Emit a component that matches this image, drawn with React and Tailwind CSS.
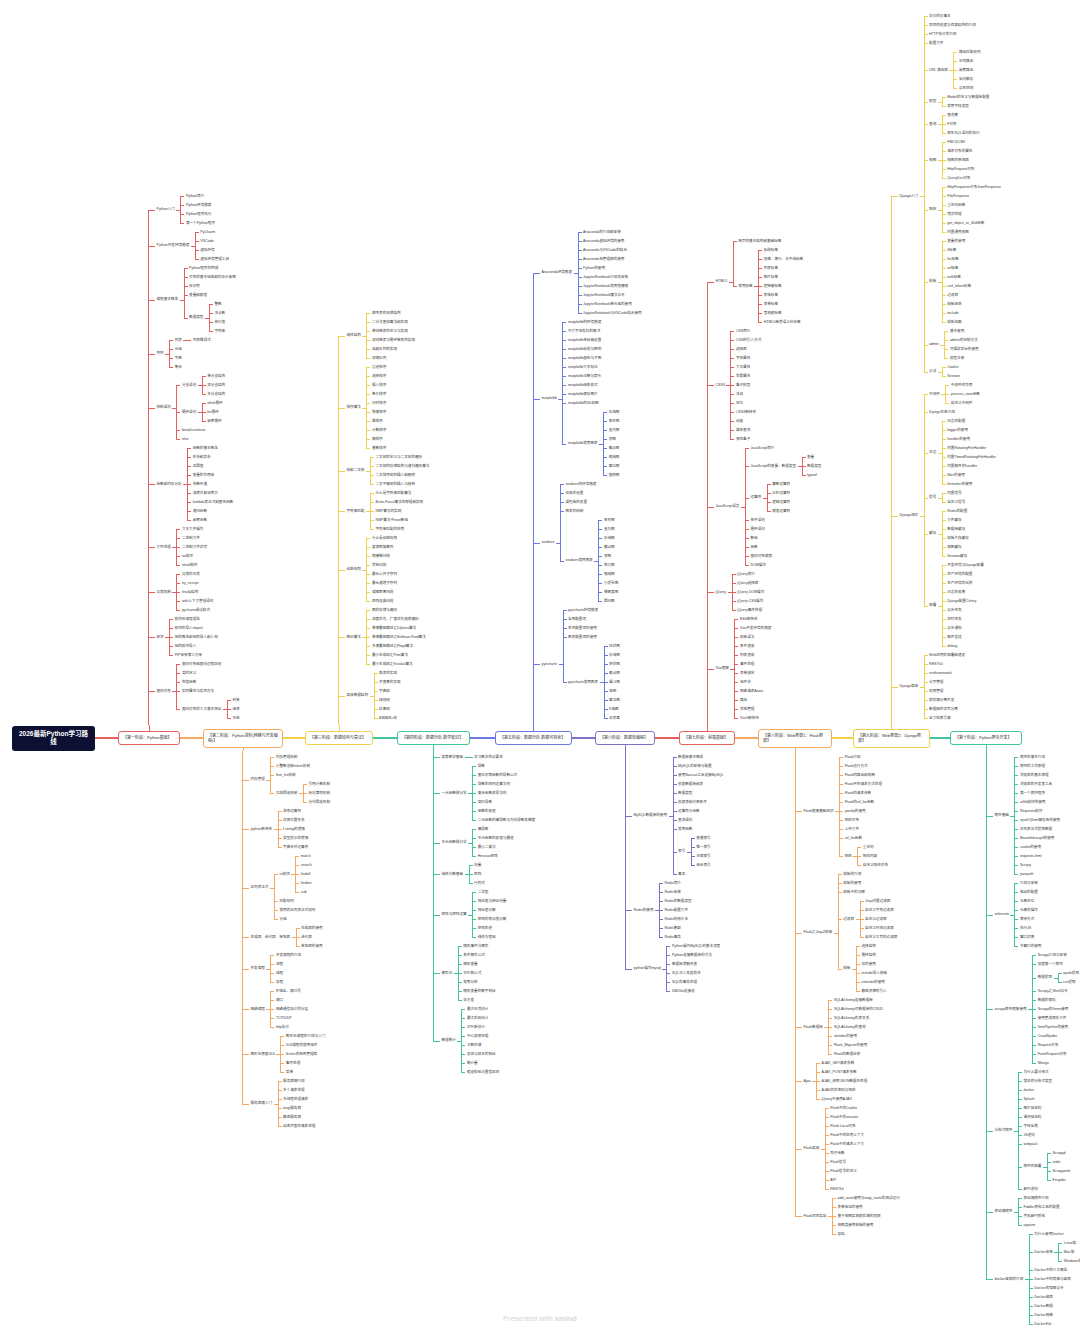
import React from 'react';

// colour themes for each stage (lines + node borders)
const T = {
  red: { bg: 'bg-[#e4605c]', bd: 'border-[#e4605c]' },
  orange: { bg: 'bg-[#f4a862]', bd: 'border-[#f4a862]' },
  yellow: { bg: 'bg-[#f3d04c]', bd: 'border-[#f3d04c]' },
  green: { bg: 'bg-[#3fc3a0]', bd: 'border-[#3fc3a0]' },
  blue: { bg: 'bg-[#6b79e3]', bd: 'border-[#6b79e3]' },
  purple: { bg: 'bg-[#7b73c8]', bd: 'border-[#7b73c8]' },
};

const stage1 = [
  ['Python入门', ['Python简介', 'Python环境搭建', 'Python程序执行', '第一个Python程序']],
  ['Python开发环境搭建', ['PyCharm', 'VSCode', '虚拟环境', '虚拟环境管理工具']],
  ['编程基本概念', ['Python程序的构成', '对象的基本组成和内存示意图', '标识符', '变量和赋值', ['数据类型', ['整数', '浮点数', '布尔值', '字符串']]]],
  ['序列', [['列表', ['列表推导式']], '元组', '字典', '集合']],
  ['控制语句', [['分支语句', ['单分支结构', '双分支结构', '多分支结构']], ['循环语句', ['while循环', 'for循环', '嵌套循环']], 'break/continue', 'else']],
  ['函数和内存分析', ['函数的基本概念', '形参和实参', '返回值', '变量的作用域', '参数传递', '浅拷贝和深拷贝', 'lambda表达式和匿名函数', '递归函数', '嵌套函数']],
  ['文件处理', ['文本文件操作', '二进制文件', '二进制文件读写', 'os模块', 'shutil模块']],
  ['异常机制', ['异常的本质', 'try_except', 'finally结构', 'with上下文管理语句', 'pycharm调试模式']],
  ['模块', ['模块化编程理念', '模块的导入import', '包的概念和包的导入和入包', '包的模块导入', 'PIP安装第三方库']],
  ['面向对象', ['面向对象和面向过程区别', '类的定义', '构造函数', '实例属性与实例方法', ['面向对象的三大基本特征', ['封装', '继承', '多态']]]],
];

const stage2 = [
  ['内存管理', ['内存管理机制', '小整数池和intern机制', 'free_list机制', ['垃圾回收机制', ['引用计数机制', '标记清除机制', '分代回收机制']]]],
  ['python新特性', ['海象运算符', '仅限位置形参', 'f-string的增强', '类型提示的增强', '字典合并运算符']],
  ['正则表达式', [['re模块', ['match', 'search', 'findall', 'finditer', 'sub']], '匹配规则', '常用的正则表达式规则', '分组']],
  ['生成器、迭代器、装饰器', ['生成器的使用', '迭代器', '装饰器的使用']],
  ['并发编程', ['并发编程的介绍', '进程', '线程', '协程']],
  ['网络编程', ['IP地址、端口号', '端口', '网络通信协议的分层', 'TCP/UDP', 'http协议']],
  ['图形化界面GUI', ['图形化编程的介绍与入门', 'GUI编程的常用组件', 'tkinter的布局管理器', '事件处理', '菜单']],
  ['服务器端入门', ['服务器端介绍', '多个请求处理', '多线程处理请求', 'wsgi服务器', '静态服务器', '动态页面的请求处理']],
];

const stage3 = [
  ['线性结构', ['顺序表的存储结构', '二分法查找算法和实现', '单向链表的定义与实现', '双向链表与循环链表的实现', '栈和队列的实现', '双端队列']],
  ['排序算法', ['冒泡排序', '选择排序', '插入排序', '希尔排序', '归并排序', '快速排序', '堆排序', '计数排序', '桶排序', '基数排序']],
  ['树和二叉树', ['二叉树的定义与二叉树的遍历', '二叉树的存储结构与递归遍历算法', '二叉排序树的插入和删除', '二叉平衡树的插入与旋转']],
  ['字符串匹配', ['什么是字符串匹配算法', 'Brute-Force算法的原理和实现', 'KMP算法的实现', 'KMP算法中next数组', '字符串匹配的应用']],
  ['动态规划', ['什么是动态规划', '斐波那契数列', '爬楼梯问题', '背包问题', '最长公共子序列', '最长递增子序列', '编辑距离问题', '矩阵连乘问题']],
  ['图论算法', ['图的存储与遍历', '深度优先、广度优先搜索遍历', '单源最短路径之Dijkstra算法', '单源最短路径之Bellman-Ford算法', '多源最短路径之Floyd算法', '最小生成树之Prim算法', '最小生成树之Kruskal算法']],
  ['高级数据结构', ['跳表的实现', '并查集的实现', '字典树', '线段树', '红黑树', 'B树和B+树']],
];

const stage4 = [
  ['高等数学基础', ['学习数学的必要性']],
  ['一元函数微分学', ['导数', '基本初等函数的导数公式', '导数的四则运算法则', '复合函数求导法则', '高阶导数', '函数的极值', '二元函数的偏导数与方向导数及梯度']],
  ['多元函数微分学', ['偏导数', '多元函数的极值与最值', '最小二乘法', 'Hessian矩阵']],
  ['线性代数基础', ['向量', '矩阵', '行列式']],
  ['矩阵与矩阵运算', ['二次型', '特征值与特征向量', '特征值分解', '矩阵的奇异值分解', '矩阵的逆', '线性方程组']],
  ['概率论', ['随机事件与概率', '条件概率公式', '随机变量', '贝叶斯公式', '常用分布', '随机变量的数字特征', '协方差']],
  ['数理统计', ['最大似然估计', '最大后验估计', '贝叶斯估计', '中心极限定理', '大数定律', '总体与样本的特征', '统计量', '假设检验与置信区间']],
];

const stage5 = [
  ['Anaconda环境搭建', ['Anaconda的介绍和安装', 'Anaconda虚拟环境的使用', 'Anaconda与VSCode的结合', 'Anaconda包管理器的使用', 'Python的使用', 'JupyterNotebook介绍及安装', 'JupyterNotebook常用快捷键', 'JupyterNotebook魔法命令', 'JupyterNotebook单元格的使用', 'JupyterNotebook与VSCode结合使用']],
  ['matplotlib', ['matplotlib的环境搭建', '中文字体乱码的解决', 'matplotlib坐标轴设置', 'matplotlib标题与图例', 'matplotlib画布与子图', 'matplotlib文本标注', 'matplotlib注释与箭头', 'matplotlib线条样式', 'matplotlib保存图片', 'matplotlib的3D绘图', ['matplotlib常用图表', ['折线图', '条形图', '直方图', '饼图', '散点图', '箱线图', '雷达图', '面积图']]]],
  ['seaborn', ['seaborn的环境搭建', '风格的设置', '调色板的设置', '图表的绘制', ['seaborn常用图表', ['条形图', '直方图', '折线图', '散点图', '饼图', '热力图', '箱线图', '小提琴图', '核密度图', '回归图']]]],
  ['pyecharts', ['pyecharts环境搭建', '全局配置项', '系列配置项的使用', '图表配置项的使用', ['pyecharts常用图表', ['柱状图', '折线图', '饼状图', '散点图', '漏斗图', '地图', '雷达图', 'K线图', '仪表盘']]]],
];

const stage6 = [
  ['MySQL数据库的使用', ['数据库基本概念', 'MySQL的安装与配置', '使用Navicat工具连接MySQL', '创建数据库和表', '数据类型', '创建表和约束条件', '运算符与函数', '查询语句', '常用函数', ['索引', ['普通索引', '唯一索引', '主键索引', '组合索引']], '事务']],
  ['Redis的使用', ['Redis简介', 'Redis安装', 'Redis的数据类型', 'Redis配置文件', 'Redis的持久化', 'Redis集群', 'Redis事务']],
  ['python操作mysql', ['Python操作MySQL的基本流程', 'Python连接数据库的方法', '数据库增删改查', 'SQL注入及其防范', 'SQL的事务处理', 'DBUtils连接池']],
];

const stage7 = [
  ['HTML5', ['网页的基本结构和基础标签', ['常用标签', ['标题标签', '段落、换行、水平线标签', '列表标签', '图片标签', '超链接标签', '表格标签', '表单标签', '音视频标签', 'HTML5新增语义化标签']]]],
  ['CSS3', ['CSS简介', 'CSS的引入方式', '选择器', '字体属性', '文本属性', '背景属性', '盒子模型', '浮动', '定位', 'CSS3新特性', '动画', '媒体查询', '弹性盒子']],
  ['JavaScript语言', ['JavaScript简介', ['JavaScript的变量、数据类型', ['变量', '数据类型', 'typeof']], ['运算符', ['算数运算符', '比较运算符', '逻辑运算符', '赋值运算符']], '条件语句', '循环语句', '数组', '函数', '面向对象编程', 'DOM操作']],
  ['jQuery', ['jQuery简介', 'jQuery选择器', 'jQuery DOM操作', 'jQuery CSS操作', 'jQuery事件处理']],
  ['Vue框架', ['ES6新特性', 'Vue开发环境的搭建', '模板语法', '条件渲染', '列表渲染', '事件处理', '表单绑定', '组件化', '网络请求Axios', '路由', '状态管理', 'Vue3新特性']],
];

const stage8 = [
  ['Flask框架基础知识', ['Flask介绍', 'Flask运行方式', 'Flask的路由和视图', 'Flask不同请求方式处理', 'Flask的请求参数', 'Flask的url_for函数', 'jsonify的使用', '响应对象', '上传文件', 'url_for函数', ['响应', ['重定向', '响应内容', '自定义响应对象']]]],
  ['Flask之Jinja2模板', ['模板的介绍', '模板的使用', '模板中的注释', ['过滤器', ['Jinja内置过滤器', '自定义字符过滤器', '自定义过滤器', '自定义时间过滤器', '自定义大写的过滤器']], ['模板', ['选择结构', '循环结构', '宏的使用', 'include导入模板', 'extends的使用', '静态资源的引入']]]],
  ['Flask数据库', ['SQLAlchemy连接数据库', 'SQLAlchemy对数据库的CRUD', 'SQLAlchemy的表关系', 'SQLAlchemy的查询', 'alembic的使用', 'Flask_Migrate的使用', 'Flask的数据迁移']],
  ['Ajax', ['AJAX_GET请求参数', 'AJAX_POST请求参数', 'AJAX_获取JSON数据并处理', 'AJAX的状态码与响应', 'jQuery中使用AJAX']],
  ['Flask高级', ['Flask中的Cookie', 'Flask中的session', 'Flask.Local对象', 'Flask中的应用上下文', 'Flask中的请求上下文', '钩子函数', 'Flask信号', 'Flask信号的定义', 'API', 'RESTful']],
  ['Flask项目实战', ['add_route使用与wsgi_route的测试运行', '表单验证的使用', '基于视图实现前后端的权限', '视图类使用模板的使用', '总结']],
];

const stage9 = [
  ['Django入门', [
    '学会的记事本', '项目的创建与目录结构的介绍', 'HTTP协议的介绍', '配置文件',
    ['URL 路由器', ['路由匹配规则', '正则路由', '嵌套路由', '反向解析', '命名空间']],
    ['模型', ['Model的定义与数据库配置', '常用字段类型']],
    ['查询', ['查询集', 'F对象', '原生SQL语句的执行']],
    ['视图', ['FBV与CBV', '请求对象的属性', '视图的装饰器', 'HttpRequest对象', 'QueryDict对象']],
    ['响应', ['HttpResponse对象JsonResponse', 'FileResponse', '重定向函数', '错误处理', 'get_object_or_404函数', '内置通用视图']],
    ['模板', ['变量的使用', 'if标签', 'for标签', 'url标签', 'with标签', 'csrf_token标签', '过滤器', '模板继承', 'include', '模板加载']],
    ['admin', ['基本使用', 'admin的定制方法', '可插拔后台的使用', '模型注册']],
    ['会话', ['Cookie', 'Session']],
  ]],
  ['Django进阶', [
    ['中间件', ['中间件的作用', 'process_view函数', '自定义中间件']],
    'Django生态介绍',
    ['日志', ['日志的配置', 'logger的使用', 'handler的使用', '内置RotatingFileHandler', '内置TimedRotatingFileHandler', '内置邮件的handler', 'filter的使用', 'formatter的使用']],
    ['信号', ['内置信号', '自定义信号']],
    ['缓存', ['Redis的配置', '文件缓存', '数据库缓存', '模板片段缓存', '视图缓存', 'Session缓存']],
    ['部署', ['开发环境与Django部署', '生产环境的配置', '生产环境的迁移', '日志的收集', 'Django配置Celery', '异步任务', '定时任务', '异步通知', '邮件发送', 'debug']],
  ]],
  ['Django高级', ['Web应用的部署和建设', 'RESTful', 'restframework', '分页管理', '权限管理', '前后端分离开发', '数据库的读写分离', '全文检索引擎']],
];

const stage10 = [
  ['爬虫基础', ['爬虫的基本介绍', '爬虫的工作原理', '浏览器的基本原理', '浏览器的开发者工具', '第一个爬虫程序', 'urllib模块的使用', 'Requests模块', 'xpath与lxml解析库的使用', '正则表达式提取数据', 'Beautifulsoup4的使用', 'cookie的使用', 'requests-html', 'Scrapy', 'jsonpath']],
  ['selenium', ['介绍与安装', '驱动的配置', '元素定位', '元素的操作', '等待方式', '执行JS', '窗口切换', '多窗口的使用']],
  ['scrapy爬虫框架使用', ['Scrapy介绍与安装', '创建第一个爬虫', ['数据提取', ['xpath提取', 'css提取']], 'Scrapy之Shell命令', '数据的保存', 'Scrapy的Items使用', '使用管道保存文件', 'ItemPipeline的使用', 'CrawlSpider', 'Request对象', 'FormRequest对象', 'Mongo']],
  ['分布式爬虫', ['为什么要分布式', '常见的分布式类型', 'docker', 'Splash', '图片验证码', '滑块验证码', '字体反爬', 'JS逆向', 'webpack', ['爬虫的部署', ['Scrapyd', 'redis', 'Scrapyweb', 'Feapder']], 'APP逆向']],
  ['移动端爬虫', ['移动端爬虫介绍', 'Fiddler抓包工具的配置', '手机APP抓包', 'appium']],
  ['docker容器的介绍', ['为什么使用Docker', ['Docker安装', ['Linux版', 'Mac版', 'Windows版']], 'Docker中的三大概念', 'Docker中的镜像与容器', 'Docker的镜像命令', 'Docker容器', 'Docker数据', 'Docker网络', 'DockerFile']],
];

function Node({ n, t }) {
  const label = typeof n === 'string' ? n : n[0];
  const kids = typeof n === 'string' ? null : n[1];
  return (
    <div className="flex items-center">
      <span className="h-[9px] flex items-center px-[1.5px] whitespace-nowrap text-[3.6px] leading-none text-[#3a3a3a]">
        {label}
      </span>
      {kids && (
        <>
          <div className={`w-[4px] h-px shrink-0 ${t.bg}`} />
          <Kids items={kids} t={t} />
        </>
      )}
    </div>
  );
}

// mode: undefined for nested lists, 'up' / 'down' for a stage trunk
function Kids({ items, t, mode }) {
  return (
    <div className="flex flex-col">
      {items.map((n, i) => {
        const top = mode === 'down' ? true : i > 0;
        const bottom = mode === 'up' ? true : i < items.length - 1;
        return (
          <div key={i} className="flex items-stretch">
            <div className={`flex flex-col shrink-0 ${mode ? 'w-[7px]' : 'w-[4px]'}`}>
              <div className={`flex-1 ${top ? `border-l ${t.bd}` : ''}`} />
              <div className={`h-px ${t.bg}`} />
              <div className={`flex-1 ${bottom ? `border-l ${t.bd}` : ''}`} />
            </div>
            <Node n={n} t={t} />
          </div>
        );
      })}
    </div>
  );
}

function UpTree({ items, t, w }) {
  return (
    <div className={`flex flex-col shrink-0 ${w}`}>
      <Kids items={items} t={t} mode="up" />
      <div className={`h-[2px] border-l ${t.bd}`} />
    </div>
  );
}

function DownTree({ items, t, w }) {
  return (
    <div className={`flex flex-col shrink-0 ${w}`}>
      <div className={`h-[2px] border-l ${t.bd}`} />
      <Kids items={items} t={t} mode="down" />
    </div>
  );
}

function Stage({ label, t, w, up }) {
  return (
    <div className={`flex flex-col items-center self-stretch shrink-0 ${w}`}>
      <div className={`flex-1 w-px ${up ? t.bg : ''}`} />
      <div className={`w-full bg-white border-[1.5px] ${t.bd} rounded-[3px] px-[4px] py-[3px] text-[4px] leading-[5.5px] text-[#333]`}>
        {label}
      </div>
      <div className={`flex-1 w-px ${up ? '' : t.bg}`} />
    </div>
  );
}

function Link({ t, w }) {
  return <div className={`h-[1.5px] shrink-0 ${w} ${t.bg}`} />;
}

export default function App() {
  return (
    <div className="relative w-[1080px] h-[1332px] bg-white overflow-hidden font-['Liberation_Sans','Noto_Sans_CJK_SC',sans-serif] flex flex-col">
      {/* upper branches: odd stages */}
      <div className="h-[725px] shrink-0 flex items-end pl-[148px]">
        <UpTree items={stage1} t={T.red} w="w-[190px]" />
        <UpTree items={stage3} t={T.yellow} w="w-[195px]" />
        <UpTree items={stage5} t={T.blue} w="w-[174px]" />
        <UpTree items={stage7} t={T.red} w="w-[184px]" />
        <UpTree items={stage9} t={T.yellow} w="w-[180px]" />
      </div>

      {/* main timeline */}
      <div className="h-[26px] shrink-0 flex items-center pl-[12px]">
        <div className="w-[83px] h-[25px] shrink-0 bg-[#0d1033] rounded-[3px] flex items-center justify-center text-center text-white font-bold text-[6.5px] leading-[8px] px-[6px]">
          2026最新Python学习路线
        </div>
        <Link t={T.red} w="w-[23px]" />
        <Stage label="【第一阶段：Python基础】" t={T.red} w="w-[62px]" up />
        <Link t={T.orange} w="w-[23px]" />
        <Stage label="【第二阶段：Python进阶(网络与开发编程)】" t={T.orange} w="w-[80px]" />
        <Link t={T.yellow} w="w-[22px]" />
        <Stage label="【第三阶段：数据结构与算法】" t={T.yellow} w="w-[68px]" up />
        <Link t={T.green} w="w-[24px]" />
        <Stage label="【第四阶段：数据分析-数学知识】" t={T.green} w="w-[73px]" />
        <Link t={T.blue} w="w-[25px]" />
        <Stage label="【第五阶段：数据分析-数据可视化】" t={T.blue} w="w-[77px]" up />
        <Link t={T.purple} w="w-[23px]" />
        <Stage label="【第六阶段：数据库编程】" t={T.purple} w="w-[60px]" />
        <Link t={T.red} w="w-[24px]" />
        <Stage label="【第七阶段：前端基础】" t={T.red} w="w-[56px]" up />
        <Link t={T.orange} w="w-[23px]" />
        <Stage label="【第八阶段：Web框架1：Flask框架】" t={T.orange} w="w-[74px]" />
        <Link t={T.yellow} w="w-[21px]" />
        <Stage label="【第九阶段：Web框架2：Django框架】" t={T.yellow} w="w-[77px]" up />
        <Link t={T.green} w="w-[20px]" />
        <Stage label="【第十阶段：Python爬虫开发】" t={T.green} w="w-[72px]" />
      </div>

      {/* lower branches: even stages */}
      <div className="flex-1 flex items-start pl-[242px]">
        <DownTree items={stage2} t={T.orange} w="w-[191px]" />
        <DownTree items={stage4} t={T.green} w="w-[192px]" />
        <DownTree items={stage6} t={T.purple} w="w-[170px]" />
        <DownTree items={stage8} t={T.orange} w="w-[191px]" />
        <DownTree items={stage10} t={T.green} w="w-[90px]" />
      </div>

      <div className="absolute bottom-[8px] left-0 right-0 text-center text-[7.5px] text-[#d6d6d6]">
        Presented with <span className="font-bold">xmind</span>
      </div>
    </div>
  );
}
